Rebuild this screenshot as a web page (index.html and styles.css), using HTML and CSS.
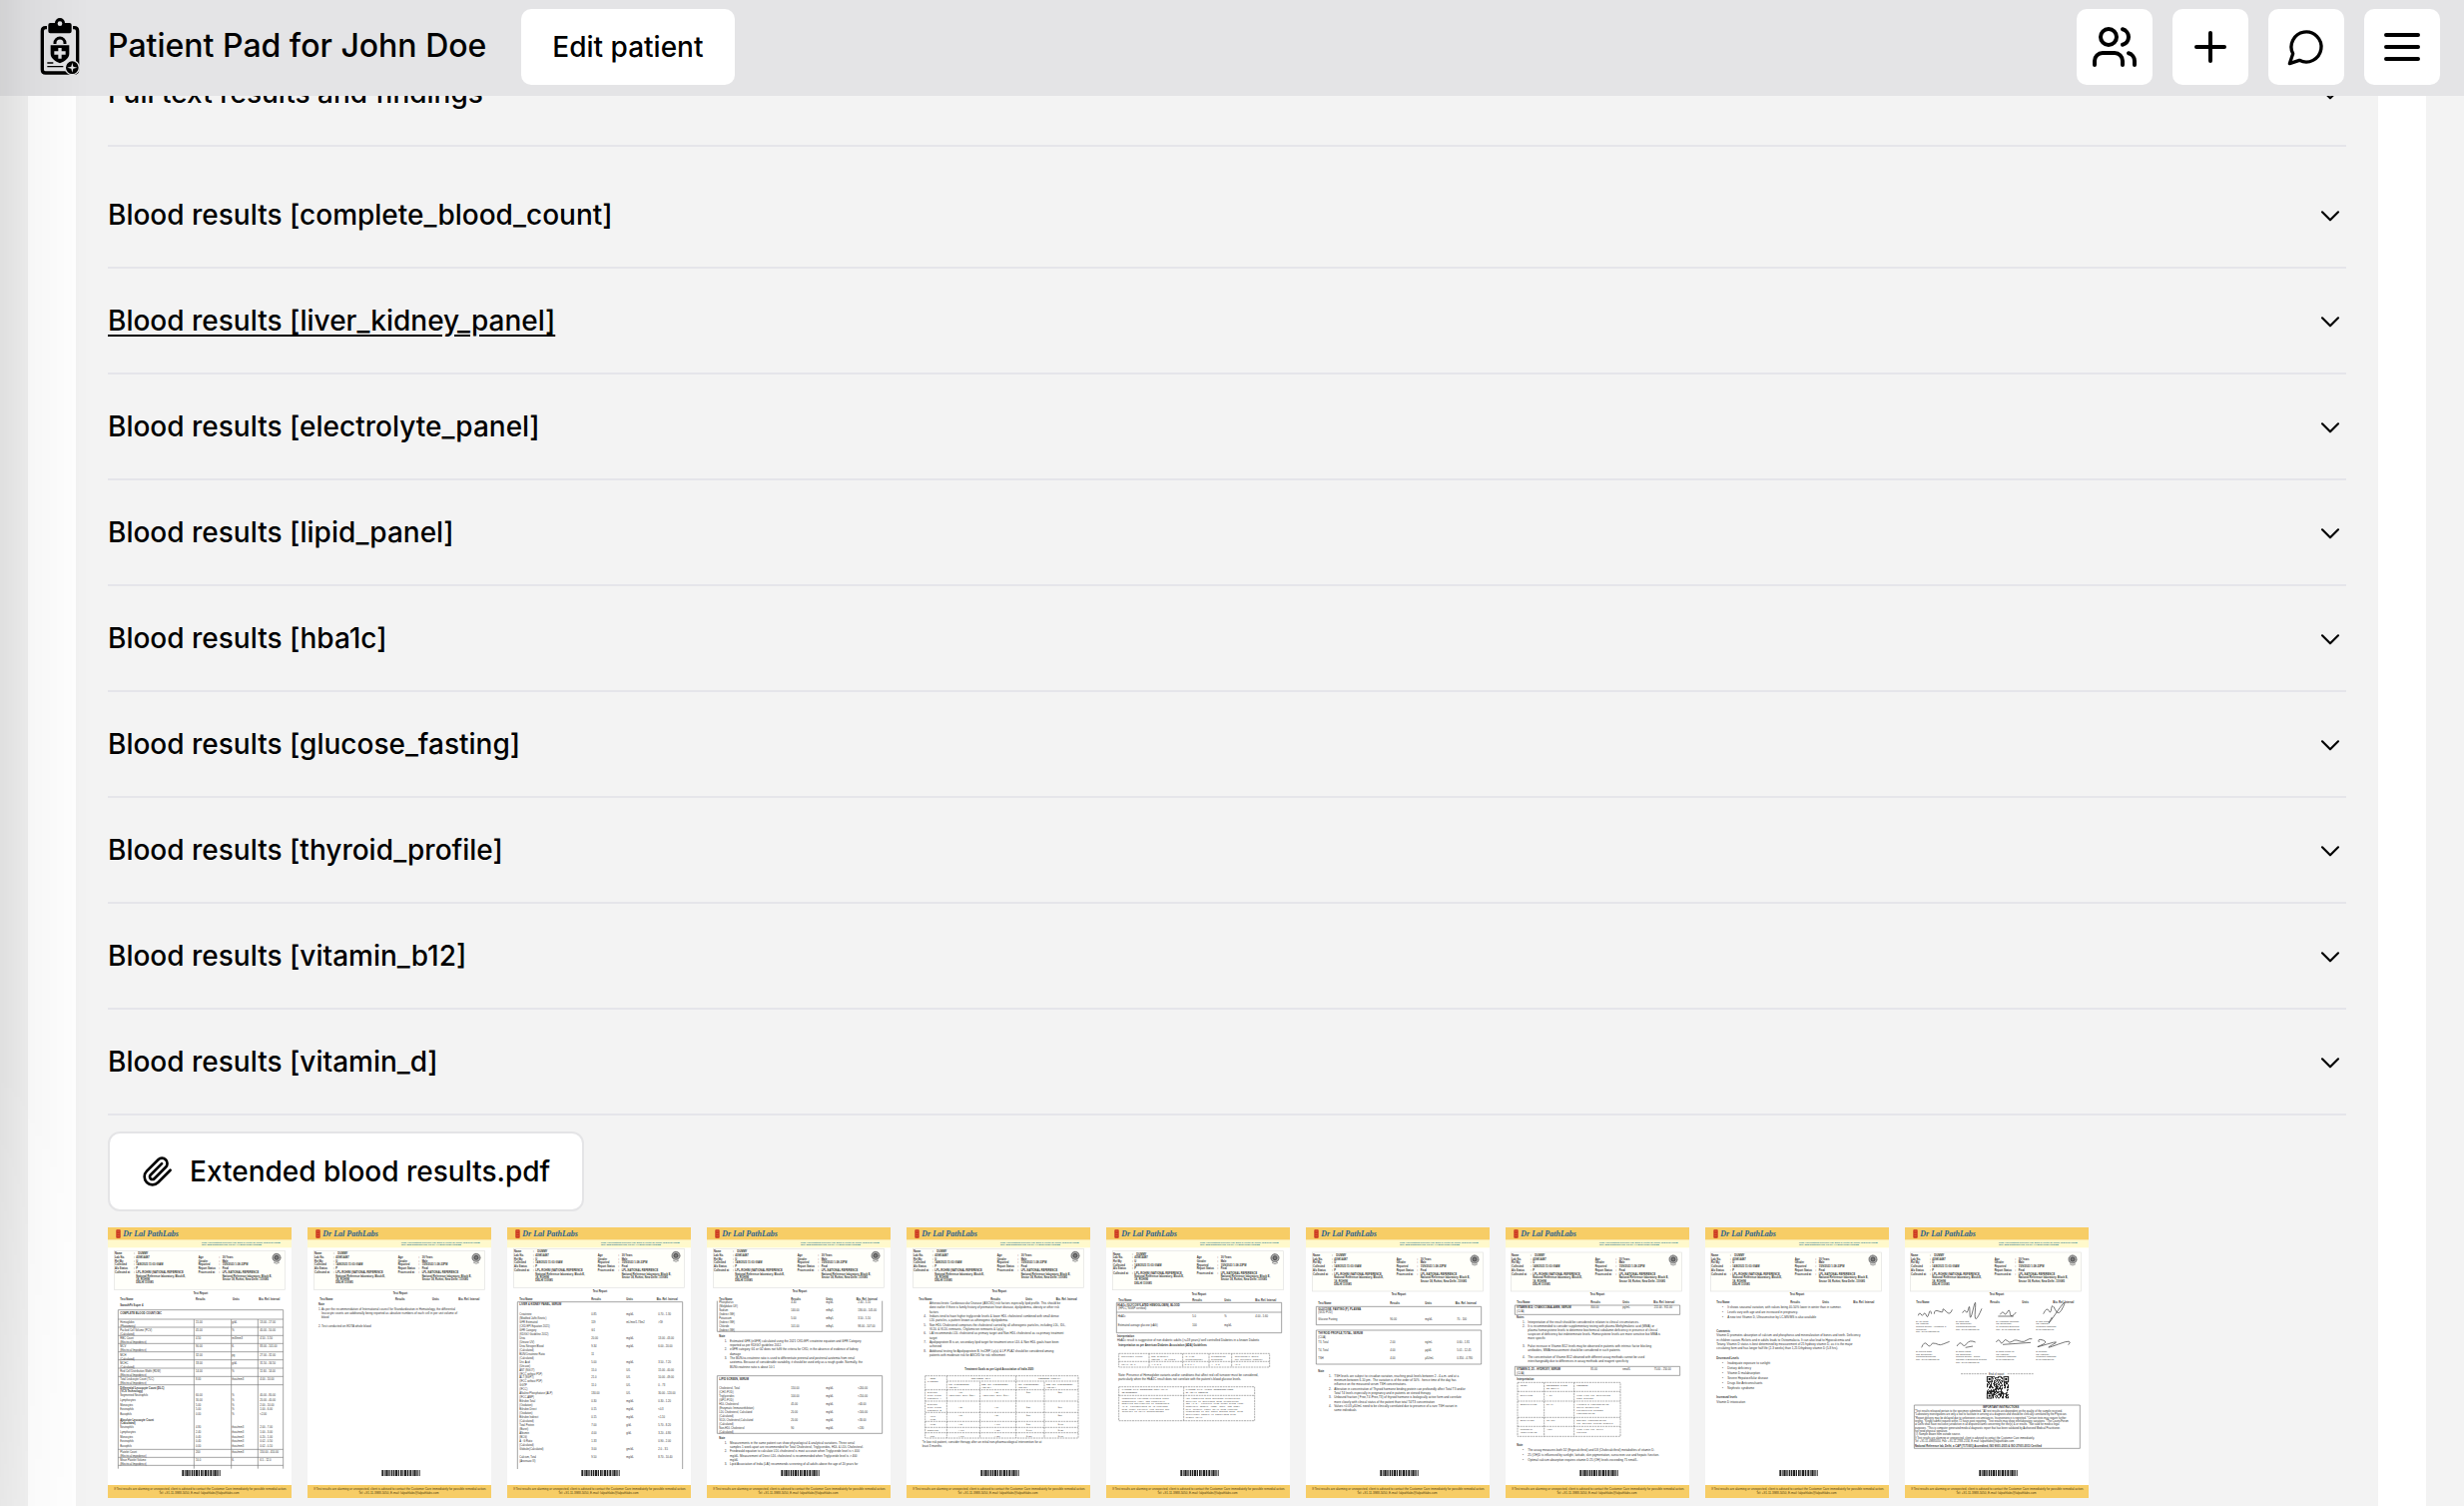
FILE: index.html
```html
<!DOCTYPE html>
<html lang="en">
<head>
<meta charset="utf-8">
<meta name="viewport" content="width=device-width, initial-scale=1">
<title>Patient Pad for John Doe</title>
<link rel="stylesheet" href="styles.css">
</head>
<body>
<svg class="sprite" aria-hidden="true">
  <symbol id="chevron" viewBox="0 0 24 24"><path d="m6 10 6 6 6-6"/></symbol>
  <symbol id="letterhead" viewBox="24 27 552 813">
    <rect x="24" y="27" width="552" height="813" fill="#fff"/>
    <rect x="24" y="27" width="552" height="38" fill="#f7cd66"/>
    <rect x="24" y="65" width="552" height="23" fill="#fff9cc"/>
    <rect x="49" y="34" width="13" height="25" rx="2" fill="#c9301f"/>
    <path d="M52 39h7M52 46h7M52 53h7" stroke="#e8803f" stroke-width="2"/>
    <rect x="24" y="801" width="552" height="39" fill="#f7cd66"/>
    <path d="M247 765h115" stroke="#222" stroke-width="18" stroke-dasharray="5 2 3 2 7 2 4 3"/>
  </symbol>
  <symbol id="seal" viewBox="0 0 30 38">
    <circle cx="15" cy="15" r="12" fill="#aaa" stroke="#555" stroke-width="3" stroke-dasharray="3 1"/>
    <circle cx="15" cy="15" r="6" fill="#777" stroke="#333" stroke-width="2"/>
    <path d="M6 29q9 8 18 0" fill="none" stroke="#999" stroke-width="3"/>
  </symbol>
</svg>

<header class="topbar">
  <svg class="logo" viewBox="120 54 120 172" aria-hidden="true">
    <path d="M141 82h-4q-10 0-10 10v116q0 10 10 10h86q10 0 10-10V92q0-10-10-10h-4" fill="none" stroke="#000" stroke-width="10"/>
    <path d="M151 68h14a15 15 0 0 1 30 0h14q6 0 6 6v19q0 6-6 6h-58q-6 0-6-6V74q0-6 6-6Z"/>
    <circle cx="180" cy="70" r="7" fill="#e4e4e6"/>
    <path d="M165 131v-3a15 15 0 0 1 30 0v3" fill="none" stroke="#000" stroke-width="9"/>
    <path d="M152 135h56v25c0 14-14 23-28 29-14-6-28-15-28-29Z"/>
    <path d="M180 143v32M163 158h34" stroke="#e4e4e6" stroke-width="10"/>
    <path d="M142 188h18M142 199h48" stroke="#000" stroke-width="4"/>
    <circle cx="217" cy="202" r="21" stroke="#e4e4e6" stroke-width="4"/>
    <path d="m217 187 3 12 12 3-12 3-3 12-3-12-12-3 12-3Z" fill="#e4e4e6"/>
  </svg>
  <h1>Patient Pad for John Doe</h1>
  <button class="edit" type="button">Edit patient</button>
  <nav class="tools" aria-label="Tools">
    <button type="button" aria-label="Patients"><svg viewBox="0 0 24 24"><path d="M16 21v-2a4 4 0 0 0-4-4H6a4 4 0 0 0-4 4v2"/><circle cx="9" cy="7" r="4"/><path d="M22 21v-2a4 4 0 0 0-3-3.87M16 3.13a4 4 0 0 1 0 7.75"/></svg></button>
    <button type="button" aria-label="Add"><svg viewBox="0 0 24 24"><path d="M5 12h14M12 5v14"/></svg></button>
    <button type="button" aria-label="Chat"><svg class="chat" viewBox="0 0 24 24"><path d="M7.9 20A9 9 0 1 0 4 16.1L2 22Z"/></svg></button>
    <button type="button" aria-label="Menu"><svg viewBox="0 0 24 24"><path d="M4 12h16M4 6h16M4 18h16"/></svg></button>
  </nav>
</header>

<main class="sheet">
  <article class="record">
    <section class="accordion">
      <h2><button type="button">Full text results and findings<svg><use href="#chevron"/></svg></button></h2>
    </section>
    <section class="accordion">
      <h2><button type="button">Blood results [complete_blood_count]<svg><use href="#chevron"/></svg></button></h2>
      <h2><button type="button" class="active">Blood results [liver_kidney_panel]<svg><use href="#chevron"/></svg></button></h2>
      <h2><button type="button">Blood results [electrolyte_panel]<svg><use href="#chevron"/></svg></button></h2>
      <h2><button type="button">Blood results [lipid_panel]<svg><use href="#chevron"/></svg></button></h2>
      <h2><button type="button">Blood results [hba1c]<svg><use href="#chevron"/></svg></button></h2>
      <h2><button type="button">Blood results [glucose_fasting]<svg><use href="#chevron"/></svg></button></h2>
      <h2><button type="button">Blood results [thyroid_profile]<svg><use href="#chevron"/></svg></button></h2>
      <h2><button type="button">Blood results [vitamin_b12]<svg><use href="#chevron"/></svg></button></h2>
      <h2><button type="button">Blood results [vitamin_d]<svg><use href="#chevron"/></svg></button></h2>
    </section>
    <button class="attachment" type="button"><svg viewBox="0 0 24 24"><path d="m21.44 11.05-9.19 9.19a6 6 0 0 1-8.49-8.49l8.57-8.57A4 4 0 1 1 18 8.84l-8.59 8.57a2 2 0 0 1-2.83-2.83l8.49-8.48"/></svg>Extended blood results.pdf</button>
    <div class="pages" id="pages"></div>
  </article>
</main>
<div class="edge-shade"></div>
<script src="pages.js"></script>
</body>
</html>
```
FILE: styles.css
```css
* { box-sizing: border-box; }

body {
  margin: 0;
  background: #f3f3f3;
  color: #000;
  font-family: Inter, "Liberation Sans", sans-serif;
  font-size: 28px;
  font-weight: 500;
  line-height: 40px;
}

button {
  font: inherit;
  color: inherit;
  cursor: pointer;
}

button svg {
  fill: none;
  stroke: currentColor;
  stroke-width: 2;
  stroke-linecap: round;
  stroke-linejoin: round;
}

.sprite {
  position: absolute;
  width: 0;
  height: 0;
}

.topbar {
  position: fixed;
  inset: 0 0 auto;
  z-index: 1;
  display: flex;
  align-items: center;
  height: 96px;
  padding: 0 24px 2px 40px;
  background: #e4e4e6;
}

.logo {
  width: 40px;
  height: 58px;
  margin-right: 28px;
}

.topbar h1 {
  margin: 0 35px 0 0;
  padding-bottom: 2px;
  font-size: 32px;
  font-weight: 500;
}

.topbar button {
  height: 76px;
  border: 0;
  border-radius: 10px;
  background: #fff;
}

.topbar .edit { padding: 0 31px; }

.tools {
  display: flex;
  gap: 20px;
  margin-left: auto;
}

.tools button {
  display: grid;
  place-items: center;
  width: 76px;
  padding: 0;
}

.tools svg {
  width: 48px;
  height: 48px;
}

.tools .chat {
  width: 40px;
  height: 40px;
}

.sheet {
  min-height: 100vh;
  margin: 0 38px 0 28px;
  padding: 0 48px;
  background: #fff;
}

.record {
  min-height: 100vh;
  padding: 41px 32px 8px;
  background: #f3f3f3;
}

.accordion { margin-bottom: 16px; }

.accordion h2 {
  margin: 0;
  border-bottom: 2px solid #e5e5ea;
  font: inherit;
}

.accordion button {
  display: flex;
  align-items: center;
  justify-content: space-between;
  width: 100%;
  padding: 32px 0;
  border: 0;
  background: none;
  text-align: left;
}

.accordion .active {
  text-decoration: underline;
  text-underline-offset: 4px;
}

.accordion svg {
  width: 32px;
  height: 32px;
  stroke-width: 1.6;
}

.attachment {
  display: flex;
  align-items: center;
  gap: 16px;
  height: 80px;
  padding: 0 32px;
  border: 2px solid #e4e4e6;
  border-radius: 12px;
  background: #fff;
}

.attachment svg {
  width: 32px;
  height: 32px;
}

.pages {
  display: flex;
  flex-wrap: wrap;
  gap: 16px;
  margin-top: 16px;
}

.page {
  display: block;
  width: 184px;
  height: 271px;
}

.page text {
  fill: #333;
  font: 8px "Liberation Sans", sans-serif;
}

.page .para { font-size: 9px; }
.page .bold { font-weight: 700; fill: #333; }
.page .mono { font-family: "Liberation Mono", monospace; font-size: 7px; }
.page .tiny { font-size: 6px; }

.page .brand {
  fill: #2b6290;
  font: italic 700 24px "Liberation Serif", serif;
}

.page .address {
  fill: #2f7d92;
  font-size: 6px;
  font-weight: 700;
}

.page .footer { fill: #4d3b0c; font-size: 9px; }

.page .rule {
  fill: none;
  stroke: #777;
  stroke-width: 2;
}

.page .dash {
  fill: none;
  stroke: #888;
  stroke-width: 2;
  stroke-dasharray: 6 2;
}

.page .ink {
  fill: none;
  stroke: #333;
  stroke-width: 2;
}

.edge-shade {
  position: fixed;
  inset: 0 auto 0 0;
  z-index: 2;
  width: 90px;
  background: linear-gradient(90deg, rgb(0 0 0 / 8%), rgb(0 0 0 / 3%) 35%, transparent);
  mask-image: linear-gradient(#000 70%, rgb(0 0 0 / 60%));
  pointer-events: none;
}
```
FILE: pages.js
```js
// Page previews of the attached report. Each page is drawn on a 552 x 813 sheet.
// A text entry reads "x y class|text"; the class may be left out.
const put = (entry, dx = 0, dy = 0) => {
  const [place, ...rest] = entry.split('|');
  const [x, y, cls = ''] = place.split(' ');
  return `<text x="${+x + dx}" y="${+y + dy}" class="${cls}">${rest.join('|')}</text>`;
};
const rule = (d, cls = 'rule') => `<path class="${cls}" d="${d}"/>`;
const box = (x, y, w, h) => rule(`M${x} ${y}h${w}v${h}h${-w}Z`);
// Rows of a results table: [y, name, method, result, unit, interval]
const rows = (list, cols) => list.flatMap(([y, name, method, ...cells]) => [
  `${cols[0]} ${y}|${name}`,
  ...(method ? [`${cols[0]} ${y + 12}|(${method})`] : []),
  ...cells.map((c, i) => `${cols[i + 1]} ${y}|${c}`)
]);
// Lines of a paragraph, evenly spaced
const lines = (x, y, step, cls, ...text) => text.map((t, i) => `${x} ${y + i * step} ${cls}|${t}`);

const patient = [
  '45 109 bold|Name', '102 109 bold|:', '115 109 bold|DUMMY',
  '45 120 bold|Lab No.', '102 120 bold|:', '109 120 bold|439814487',
  '45 131 bold|Ref By', '102 131 bold|:', '109 131 bold|U',
  '45 142 bold|Collected', '102 142 bold|:', '109 142 bold|14/8/2023 11:03:00AM',
  '45 153 bold|A/c Status', '102 153 bold|:', '109 153 bold|P',
  '45 166 bold|Collected at', '102 166 bold|:', '109 166 bold|LPL-ROHINI (NATIONAL REFERENCE',
  '109 176 bold|National Reference laboratory, Block E,', '109 186 bold|18, ROHINI', '109 196 bold|DELHI 110085',
  '296 120 bold|Age', '358 120 bold|:', '368 120 bold|30 Years',
  '296 131 bold|Gender', '358 131 bold|:', '368 131 bold|Male',
  '296 142 bold|Reported', '358 142 bold|:', '368 142 bold|15/9/2023 1:38:23PM',
  '296 153 bold|Report Status', '358 153 bold|:', '368 153 bold|Final',
  '296 166 bold|Processed at', '358 166 bold|:', '368 166 bold|LPL-NATIONAL REFERENCE',
  '368 176 bold|National Reference laboratory, Block E,', '368 186 bold|Sector 18, Rohini, New Delhi -110085'
];

const A = [61, 288, 397, 481];
const B = [61, 277, 382, 478];

const pages = [
  { dy: 0, head: 246, cols: [61, 288, 399, 478],
    text: [
      '61 264 bold|SwasthFit Super 4', '61 287 bold|COMPLETE BLOOD COUNT;CBC',
      ...rows([
        [315, 'Hemoglobin', 'Photometry', '15.00', 'g/dL', '13.00 - 17.00'],
        [339, 'Packed Cell Volume (PCV)', 'Calculated', '45.00', '%', '40.00 - 50.00'],
        [364, 'RBC Count', 'Electrical Impedence', '4.50', 'mill/mm3', '4.50 - 5.50'],
        [388, 'MCV', 'Electrical Impedence', '90.00', 'fL', '83.00 - 101.00'],
        [413, 'MCH', 'Calculated', '32.00', 'pg', '27.00 - 32.00'],
        [437, 'MCHC', 'Calculated', '33.00', 'g/dL', '31.50 - 34.50'],
        [462, 'Red Cell Distribution Width (RDW)', 'Electrical Impedence', '14.00', '%', '11.60 - 14.00'],
        [487, 'Total Leukocyte Count (TLC)', 'Electrical Impedence', '8.00', 'thou/mm3', '4.00 - 10.00'],
        [534, 'Segmented Neutrophils', '', '60.00', '%', '40.00 - 80.00'],
        [548, 'Lymphocytes', '', '30.00', '%', '20.00 - 40.00'],
        [563, 'Monocytes', '', '5.00', '%', '2.00 - 10.00'],
        [577, 'Eosinophils', '', '5.00', '%', '1.00 - 6.00'],
        [592, 'Basophils', '', '0.00', '%', '&lt;2.00'],
        [630, 'Neutrophils', '', '4.80', 'thou/mm3', '2.00 - 7.00'],
        [644, 'Lymphocytes', '', '2.40', 'thou/mm3', '1.00 - 3.00'],
        [659, 'Monocytes', '', '0.40', 'thou/mm3', '0.20 - 1.00'],
        [673, 'Eosinophils', '', '0.40', 'thou/mm3', '0.02 - 0.50'],
        [688, 'Basophils', '', '0.00', 'thou/mm3', '0.02 - 0.10'],
        [704, 'Platelet Count', 'Electrical impedence', '200', 'thou/mm3', '150.00 - 410.00'],
        [729, 'Mean Platelet Volume', 'Electrical Impedence', '10.0', 'fL', '6.5 - 12.0']
      ], A),
      '61 512 bold|Differential Leucocyte Count (DLC)', '61 523 bold|(VCS Technology)',
      '61 608 bold|Absolute Leucocyte Count', '61 619 bold|(Calculated)'
    ],
    art: rule('M55 752V275H551V752M283 303V752M395 303V752M475 303V752M55 303H551M55 327H551M55 352H551M55 376H551M55 401H551M55 425H551M55 450H551M55 475H551M55 500H551M55 694H551M55 718H551M55 742H551') },
  { dy: 0, head: 247, cols: [61, 288, 399, 478],
    text: ['57 260 bold|Note',
      '57 275 para|1.', ...lines(66, 275, 13, 'para', 'As per the recommendation of International council for Standardization in Hematology, the differential', 'leucocyte counts are additionally being reported as absolute numbers of each cell in per unit volume of', 'blood'),
      '57 328 para|2.', '66 328 para|Test conducted on EDTA whole blood'], art: '' },
  { dy: -6, head: 246, cols: [61, 277, 382, 473],
    text: ['61 262 bold|LIVER &amp; KIDNEY PANEL, SERUM',
      ...rows([
        [291, 'Creatinine', 'Modified Jaffe,Kinetic', '0.85', 'mg/dL', '0.70 - 1.30'],
        [315, 'GFR Estimated', 'CKD EPI Equation 2021', '119', 'mL/min/1.73m2', '&gt;59'],
        [339, 'GFR Category', 'KDIGO Guideline 2012', 'G1', '', ''],
        [362, 'Urea', 'Urease UV', '20.00', 'mg/dL', '13.00 - 43.00'],
        [386, 'Urea Nitrogen Blood', 'Calculated', '9.34', 'mg/dL', '6.00 - 20.00'],
        [410, 'BUN/Creatinine Ratio', 'Calculated', '11', '', ''],
        [434, 'Uric Acid', 'Uricase', '5.00', 'mg/dL', '3.50 - 7.20'],
        [458, 'AST (SGOT)', 'IFCC without P5P', '15.0', 'U/L', '15.00 - 40.00'],
        [481, 'ALT (SGPT)', 'IFCC without P5P', '21.0', 'U/L', '10.00 - 49.00'],
        [505, 'GGTP', 'IFCC', '11.0', 'U/L', '0 - 73'],
        [529, 'Alkaline Phosphatase (ALP)', 'IFCC-AMP', '130.00', 'U/L', '30.00 - 120.00'],
        [553, 'Bilirubin Total', 'Oxidation', '0.30', 'mg/dL', '0.30 - 1.20'],
        [577, 'Bilirubin Direct', 'Oxidation', '0.15', 'mg/dL', '&lt;0.3'],
        [601, 'Bilirubin Indirect', 'Calculated', '0.15', 'mg/dL', '&lt;1.10'],
        [625, 'Total Protein', 'Biuret', '7.00', 'g/dL', '5.70 - 8.20'],
        [649, 'Albumin', 'BCG', '4.00', 'g/dL', '3.20 - 4.80'],
        [672, 'A : G Ratio', 'Calculated', '1.33', '', '0.90 - 2.00'],
        [696, 'Globulin(Calculated)', '', '3.00', 'gm/dL', '2.0 - 3.5'],
        [720, 'Calcium, Total', 'Arsenazo III', '9.50', 'mg/dL', '8.70 - 10.40']
      ], B)],
    art: rule('M55 753V251H551V753') },
  { dy: -6, head: 246, cols: [61, 277, 382, 473],
    text: [
      ...rows([
        [256, 'Phosphorus', 'Molybdate UV', '4.40', 'mg/dL', '2.40 - 5.10'],
        [280, 'Sodium', 'Indirect ISE', '140.00', 'mEq/L', '136.00 - 145.00'],
        [304, 'Potassium', 'Indirect ISE', '5.00', 'mEq/L', '3.50 - 5.10'],
        [327, 'Chloride', 'Indirect ISE', '101.00', 'mEq/L', '98.00 - 107.00'],
        [513, 'Cholesterol, Total', 'CHO-POD', '150.00', 'mg/dL', '&lt;200.00'],
        [537, 'Triglycerides', 'GPO-POD', '100.00', 'mg/dL', '&lt;150.00'],
        [561, 'HDL Cholesterol', 'Enzymatic Immunoinhibition', '45.00', 'mg/dL', '&gt;40.00'],
        [585, 'LDL Cholesterol, Calculated', 'Calculated', '20.00', 'mg/dL', '&lt;100.00'],
        [609, 'VLDL Cholesterol,Calculated', 'Calculated', '20.00', 'mg/dL', '&lt;30.00'],
        [632, 'Non-HDL Cholesterol', 'Calculated', '90', 'mg/dL', '&lt;130']
      ], B),
      '61 357 bold|Note', '61 485 bold|LIPID SCREEN, SERUM', '61 662 bold|Note',
      '77 371 para|1.', '77 397 para|2.', '77 423 para|3.',
      ...lines(93, 371, 13, 'para', 'Estimated GFR (eGFR) calculated using the 2021 CKD-EPI creatinine equation and GFR Category', 'reported as per KDIGO guideline 2012.', 'eGFR category G1 or G2 does not fulfil the criteria for CKD, in the absence of evidence of kidney', 'damage', 'The BUN-to-creatinine ratio is used to differentiate prerenal and postrenal azotemia from renal', 'azotemia. Because of considerable variability, it should be used only as a rough guide. Normally, the', 'BUN/creatinine ratio is about 10:1'),
      '77 677 para|1.', '77 703 para|2.', '77 742 para|3.',
      ...lines(93, 677, 13, 'para', 'Measurements in the same patient can show physiological &amp; analytical variations. Three serial', 'samples 1 week apart are recommended for Total Cholesterol, Triglycerides, HDL &amp; LDL Cholesterol.', 'Friedewald equation to calculate LDL cholesterol is most accurate when Triglyceride level is &lt; 400', 'mg/dL. Measurement of Direct LDL cholesterol is recommended when Triglyceride level is &gt; 400', 'mg/dL', 'Lipid Association of India (LAI) recommends screening of all adults above the age of 20 years for')
    ],
    art: rule('M55 248V340H551V248') + box(55, 473, 496, 173) },
  { dy: -6, head: 246, cols: [61, 277, 382, 473],
    text: [
      ...lines(93, 258, 13, 'para', 'Atherosclerotic Cardiovascular Disease (ASCVD) risk factors especially lipid profile. This should be', 'done earlier if there is family history of premature heart disease, dyslipidemia, obesity or other risk', 'factors', 'Indians tend to have higher triglyceride levels &amp; lower HDL cholesterol combined with small dense', 'LDL particles, a pattern known as atherogenic dyslipidemia', 'Non HDL Cholesterol comprises the cholesterol carried by all atherogenic particles, including LDL, IDL,', 'VLDL &amp; VLDL remnants, Chylomicron remnants &amp; Lp(a)', 'LAI recommends LDL cholesterol as primary target and Non HDL cholesterol as co-primary treatment', 'target', 'Apolipoprotein B is an, secondary lipid target for treatment once LDL &amp; Non HDL goals have been', 'achieved', 'Additional testing for Apolipoprotein B, hsCRP, Lp(a) &amp; LP-PLA2 should be considered among', 'patients with moderate risk for ASCVD for risk refinement'),
      '76 297 para|4.', '76 323 para|5.', '76 349 para|6.', '76 375 para|7.', '76 401 para|8.',
      '199 455 bold|Treatment Goals as per Lipid Association of India 2020',
      '95 482 mono|RISK', '87 491 mono|CATEGORY', '218 482 mono|TREATMENT GOAL', '420 482 mono|CONSIDER THERAPY',
      ...[[150, 'LDL CHOLESTEROL'], [250, 'NON HDL CHOLESTEROL'], [359, 'LDL CHOLESTEROL'], [444, 'NON HDL CHOLESTEROL']].flatMap(([x, t]) => [`${x} 500 mono|${t}`, `${x} 509 mono|(mg/dL)`]),
      '87 526 mono|Extreme', '87 535 mono|Risk Group', '87 544 mono|Category A', '87 560 mono|Extreme', '87 569 mono|Risk Group', '87 578 mono|Category B', '95 597 mono|Very', '95 606 mono|High', '95 620 mono|High', '87 638 mono|Moderate', '95 656 mono|Low',
      '150 535 mono|(Optional goal ≤30)', '252 535 mono|(Optional goal ≤60)',
      ...[526, 571, 595, 620, 638, 656].flatMap((y, i) => [`180 ${y} mono|&lt;${[50, 30, 50, 70, 100, 100][i]}`, `288 ${y} mono|&lt;${[80, 60, 80, 100, 130, 130][i]}`, `384 ${y} mono|≥${[50, 30, 50, 70, 100, 130][i]}`, `479 ${y} mono|≥${[80, 60, 80, 100, 130, 160][i]}`]),
      '71 675 para|*In low risk patient, consider therapy after an initial non-pharmacological intervention for at', '71 688 para|least 3 months'
    ],
    art: rule('M80 473H540V660H80ZM145 473V660M245 491V660M353 473V660M438 491V660M145 489H540M80 515H540M80 549H540M80 583H540M80 610H540M80 628H540M80 644H540', 'dash') },
  { dy: 1, head: 250, cols: [61, 283, 379, 472],
    text: [
      '58 263 bold|HbA1c (GLYCOSYLATED HEMOGLOBIN), BLOOD', '61 273|(HPLC, NGSP certified)',
      ...rows([[298, 'HbA1c', '', '5.0', '%', '4.00 - 5.60'], [323, 'Estimated average glucose (eAG)', '', '100', 'mg/dL', '']], [59, 283, 379, 472]),
      '57 357 bold|Interpretation', '57 369 para|HbA1c result is suggestive of non diabetic adults (&gt;=18 years)/ well controlled Diabetes in a known Diabetic',
      '61 383 bold|Interpretation as per American Diabetes Association (ADA) Guidelines',
      '70 417 mono|Reference Group', ...lines(160, 417, 8, 'mono', 'Non diabetic', 'adults &gt;=18 years'), ...lines(260, 417, 8, 'mono', 'At risk', '(Prediabetes)'), ...lines(340, 417, 8, 'mono', 'Diagnosing', 'Diabetes'), ...lines(410, 417, 8, 'mono', 'Therapeutic goals', 'for glycemic control'),
      '70 441 mono|HbA1c in %', '160 441 mono|4.0-5.6', '260 441 mono|5.7-6.4', '340 441 mono|&gt;= 6.5', '410 441 mono|&lt;7.0',
      '61 473 para|Note: Presence of Hemoglobin variants and/or conditions that affect red cell turnover must be considered,', '61 486 para|particularly when the HbA1C result does not correlate with the patient’s blood glucose levels.',
      ...lines(71, 516, 9, 'mono', 'FACTORS THAT INTERFERE WITH HbA1C', 'MEASUREMENT'), ...lines(263, 516, 9, 'mono', 'FACTORS THAT AFFECT INTERPRETATION', 'OF HBA1C RESULTS'),
      ...lines(71, 543, 8, 'mono', 'Hemoglobin variants,elevated fetal', 'hemoglobin (HbF) and chemically', 'modified derivatives of hemoglobin', '(e.g. carbamylated Hb in patients', 'with renal failure) can affect the', 'accuracy of HbA1c measurements'),
      ...lines(263, 543, 8, 'mono', 'Any condition that shortens erythrocyte', 'survival or decreases mean erythrocyte', 'age (e.g., recovery from acute blood loss,', 'hemolytic anemia, HbSS, HbCC, and HbSC)', 'will falsely lower HbA1c test results', 'regardless of the assay method used. Iron', 'deficiency anemia is associated with', 'higher HbA1c')
    ],
    art: box(55, 253, 496, 91) + rule('M55 282H551') + rule('M62 406H515V447H62ZM153 406V447M254 406V447M333 406V447M401 406V447M62 430H515M62 506H470V608H62ZM257 506V608M62 532H470', 'dash') },
  { dy: 5, head: 259, cols: [61, 277, 382, 473],
    text: ['61 276 bold|GLUCOSE, FASTING (F), PLASMA', '61 286|(GOD POD)',
      '61 349 bold|THYROID PROFILE,TOTAL, SERUM', '61 360|(CLIA)',
      ...rows([[307, 'Glucose Fasting', '', '90.00', 'mg/dL', '70 - 100'], [375, 'T3, Total', '', '2.00', 'ng/mL', '0.60 - 1.81'], [400, 'T4, Total', '', '4.00', 'µg/dL', '5.01 - 12.45'], [424, 'TSH', '', '4.00', 'µIU/mL', '0.350 - 4.780']], B),
      '61 461 bold|Note', '93 476 para|1.', '93 515 para|2.', '93 541 para|3.', '93 567 para|4.',
      ...lines(109, 476, 13, 'para', 'TSH levels are subject to circadian variation, reaching peak levels between 2 - 4.a.m. and at a', 'minimum between 6-10 pm . The variation is of the order of 50% . hence time of the day has', 'influence on the measured serum TSH concentrations.', 'Alteration in concentration of Thyroid hormone binding protein can profoundly affect Total T3 and/or', 'Total T4 levels especially in pregnancy and in patients on steroid therapy.', 'Unbound fraction ( Free,T4 /Free,T3) of thyroid hormone is biologically active form and correlate', 'more closely with clinical status of the patient than total T4/T3 concentration', 'Values &lt;0.03 µIU/mL need to be clinically correlated due to presence of a rare TSH variant in', 'some individuals')],
    art: box(55, 265, 496, 55) + box(55, 336, 496, 102) },
  { dx: -3, dy: 5, head: 255, cols: [58, 280, 376, 469],
    text: ['57 271 bold|VITAMIN B12; CYANOCOBALAMIN, SERUM', '57 282|(CLIA)', '280 271|300.00', '376 271|pg/mL', '470 271|211.00 - 911.00',
      '57 301 bold|Notes', '75 315 para|1.', '75 327 para|2.', '75 387 para|3.', '75 421 para|4.',
      ...lines(91, 315, 12, 'para', 'Interpretation of the result should be considered in relation to clinical circumstances.', 'It is recommended to consider supplementary testing with plasma Methylmalonic acid (MMA) or', 'plasma homocysteine levels to determine biochemical cobalamin deficiency in presence of clinical', 'suspicion of deficiency but indeterminate levels. Homocysteine levels are more sensitive but MMA is', 'more specific'),
      ...lines(91, 387, 11, 'para', 'False increase in Vitamin B12 levels may be observed in patients with intrinsic factor blocking', 'antibodies, MMA measurement should be considered in such patients'),
      ...lines(91, 421, 12, 'para', 'The concentration of Vitamin B12 obtained with different assay methods cannot be used', 'interchangeably due to differences in assay methods and reagent specificity'),
      '57 456 bold|VITAMIN D, 25 - HYDROXY, SERUM', '57 467|(CLIA)', '280 456|85.00', '376 456|nmol/L', '470 456|75.00 - 250.00', '58 485 bold|Interpretation',
      '68 505 mono|LEVEL', '147 505 mono|REFERENCE RANGE', '147 514 mono|IN nmol/L', '238 505 mono|COMMENTS',
      '68 533 mono|Deficient', '147 533 mono|&lt; 50', ...lines(238, 533, 9, 'mono', 'High risk for developing', 'bone disease'),
      '68 562 mono|Insufficient', '147 562 mono|50-74', ...lines(238, 562, 9, 'mono', 'Vitamin D concentration', 'which normalizes', 'Parathyroid hormone', 'concentration'),
      '68 609 mono|Sufficient', '147 609 mono|75-250', ...lines(238, 609, 9, 'mono', 'Optimal concentration', 'for maximal health benefit'),
      '68 637 mono|Potential', '68 646 mono|intoxication', '147 637 mono|&gt;250', ...lines(238, 637, 9, 'mono', 'High risk for toxic', 'effects'),
      '58 683 bold|Note', ...lines(75, 698, 15, 'para', '•', '•', '•'),
      ...lines(91, 698, 15, 'para', 'The assay measures both D2 (Ergocalciferol) and D3 (Cholecalciferol) metabolites of vitamin D.', '25 (OH)D is influenced by sunlight, latitude, skin pigmentation, sunscreen use and hepatic function.', 'Optimal calcium absorption requires vitamin D 25 (OH) levels exceeding 75 nmol/L.')],
    art: box(52, 261, 496, 28) + box(52, 445, 496, 27) + rule('M60 493H369V655H60ZM140 493V655M230 493V655M60 520H369M60 549H369M60 598H369M60 625H369', 'dash') },
  { dx: -3, dy: 5, head: 255, cols: [58, 280, 376, 469],
    text: [...lines(75, 270, 15, 'para', '•', '•', '•'), ...lines(91, 270, 15, 'para', 'It shows seasonal variation, with values being 40-50% lower in winter than in summer.', 'Levels vary with age and are increased in pregnancy.', 'A new test Vitamin D, Ultrasensitive by LC-MS/MS is also available'),
      '58 341 bold|Comments', ...lines(58, 355, 13, 'para', 'Vitamin D promotes absorption of calcium and phosphorus and mineralization of bones and teeth. Deficiency', 'in children causes Rickets and in adults leads to Osteomalacia. It can also lead to Hypocalcemia and', 'Tetany. Vitamin D status is best determined by measurement of 25 hydroxy vitamin D, as it is the major', 'circulating form and has longer half life (2-3 weeks) than 1,25 Dihydroxy vitamin D (5-8 hrs).'),
      '58 423 bold|Decreased Levels', ...lines(75, 437, 15, 'para', '•', '•', '•', '•', '•', '•'), ...lines(91, 437, 15, 'para', 'Inadequate exposure to sunlight', 'Dietary deficiency', 'Vitamin D malabsorption', 'Severe Hepatocellular disease', 'Drugs like Anticonvulsants', 'Nephrotic syndrome'),
      '58 540 bold|Increased levels', '58 554 para|Vitamin D intoxication'], art: '' },
  { dx: -3, dy: 5, head: 255, cols: [58, 280, 376, 469],
    text: [
      ...[[57, 'Dr Ajay Gupta', 'MD, Pathology', 'Technical Director - Hematology &amp;', 'Immunology', 'NRL - Dr Lal PathLabs Ltd'], [177, 'Dr Kamal Modi', 'MD, Biochemistry', 'Consultant Biochemist', 'NRL - Dr Lal PathLabs Ltd'], [298, 'Dr Himangshu Mazumdar', 'MD, Biochemistry', 'Sr. Consultant Biochemist', 'NRL - Dr Lal PathLabs Ltd'], [418, 'Dr Jatin Munjal', 'MD, Pathology', 'Consultant Pathologist', 'Dr Lal PathLabs Ltd']].flatMap(([x, ...t]) => lines(x, 311, 8, 'tiny', ...t)),
      ...[[57, 'Dr Puneeta Singh', 'PhD, Biochemistry', 'Consultant Biochemist', 'NRL - Dr Lal PathLabs Ltd'], [177, 'Dr Nimmi Kansal', 'MD, Biochemistry', 'Technical Director - Clinical', 'Chemistry &amp; Biochemical Genetics', 'NRL - Dr Lal PathLabs Ltd'], [298, 'Dr Sarita Kumari Lal', 'MD, Pathology', 'Consultant Pathologist', 'Dr Lal PathLabs Ltd'], [418, 'Dr Sunanda', 'MD, Pathology', 'Consultant Pathologist', 'Dr Lal PathLabs Ltd']].flatMap(([x, ...t]) => lines(x, 402, 8, 'tiny', ...t)),
      '276 470|End of report', '258 571 bold|IMPORTANT INSTRUCTIONS',
      ...lines(54, 582, 10, '', '*Test results released pertain to the specimen submitted. *All test results are dependent on the quality of the sample received.', '*Laboratory investigations are only a tool to facilitate in arriving at a diagnosis and should be clinically correlated by the Physician.', '*Report delivery may be delayed due to unforeseen circumstances. Inconvenience is regretted. *Certain tests may require further', 'testing. *Kindly submit request within 72 hours post reporting. *Test results may show interlaboratory variations. *The Courts/Forum', 'at Delhi shall have exclusive jurisdiction in all disputes/claims concerning the test(s) &amp; or results. *Not valid for medico legal', 'purposes. *This is computer generated medical diagnostic report that has been validated by Authorized Medical Practitioner.', 'not need physical signature.', '(#) Sample drawn from outside source.', 'If Test results are alarming or unexpected, client is advised to contact the Customer Care immediately.', 'Tel: +91-11-49885050, Fax: +91-11-2788-2134, E-mail: lalpathlabs@lalpathlabs.com'),
      '54 686 bold|National Reference lab, Delhi, a CAP (7171001) Accredited, ISO 9001:2015 &amp; ISO 27001:2013 Certified'
    ],
    art: box(52, 561, 498, 130) + rule('M192 467H272M332 467H412', 'dash') +
      rule('M64 292q4-12 8-4t8 0 8 3 8-5 8 1M112 287q0-14 14-8t12-3 10 4 18-6M197 284q6-12 10-4t8-9 4 14 10-12 6 6 20-8M310 289q8-12 12-4t10-4 8 5 18-4M304 294h46M440 287q10-22 16-10t8-6 12 4 24-10-22 20-12 12M74 388q8-20 16-10t12 2 14-4 14 4 28-10M180 384q10-16 16-6t14-2 26-4M206 388l22-4M427 372q-6-12 12-6t-8 16 20-4 16 2 18-2 30 2', 'ink') +
      rule('M298 372q8-12 12-2t10 0 12-2 14 2 14-4 14 4 16-4 16-4M318 379l84-6', 'ink') + qr(270, 475, 22, 3) }
];

// Code block of n x n cells with its three finder squares
function qr(x, y, n, size) {
  let d = '';
  for (let r = 0; r < n; r++) for (let c = 0; c < n; c++)
    if ((r * 7 + c * 5 + r * c * 3 + (r ^ c)) % 7 < 4) d += `M${x + c * size} ${y + r * size}h${size}v${size}h${-size}Z`;
  const finder = (fx, fy) => `<rect x="${fx + 1}" y="${fy + 1}" width="14" height="14" fill="#fff" stroke="#222" stroke-width="3"/><rect x="${fx + 5}" y="${fy + 5}" width="6" height="6"/>`;
  return `<rect x="${x}" y="${y}" width="66" height="66" fill="#fff"/><path d="${d}" fill="#222"/>` + finder(x, y) + finder(x + 50, y) + finder(x, y + 50);
}

document.getElementById('pages').innerHTML = pages.map(({ dx = 0, dy, head, cols, text, art }, i) => `
  <svg class="page" viewBox="24 27 552 813" role="img" aria-label="Report page ${i + 1}">
    <use href="#letterhead" x="24" y="27" width="552" height="813"/>
    ${put('70 54 brand|Dr Lal PathLabs')}
    ${put('306 74 address|Regd. Office/National Reference Lab: Block-E, Sector-18, Rohini, New Delhi-110085')}
    ${put('306 82 address|Web: www.lalpathlabs.com, CIN No.: L74899DL1995PLC065388')}
    <rect x="${43 + dx}" y="${97 + dy}" width="513" height="117" fill="#fffffa" stroke="#e2e2e0" stroke-width="2"/>
    <use href="#seal" x="${516 + dx}" y="${103 + dy}" width="30" height="38"/>
    ${patient.map(t => put(t, dx, dy)).join('')}
    ${put('281 229 bold|Test Report', dx, dy < 0 ? -8 : dy && 3)}
    ${['Test Name', 'Results', 'Units', 'Bio. Ref. Interval'].map((t, c) => put(`${cols[c]} ${head} bold|${t}`)).join('')}
    ${art}
    ${text.map(t => put(t)).join('')}
    ${put('43 817 footer|If Test results are alarming or unexpected, client is advised to contact the Customer Care immediately for possible remedial action.')}
    ${put('178 829 footer|Tel: +91-11-3988-5050, E-mail: lalpathlabs@lalpathlabs.com')}
  </svg>`).join('');
```
